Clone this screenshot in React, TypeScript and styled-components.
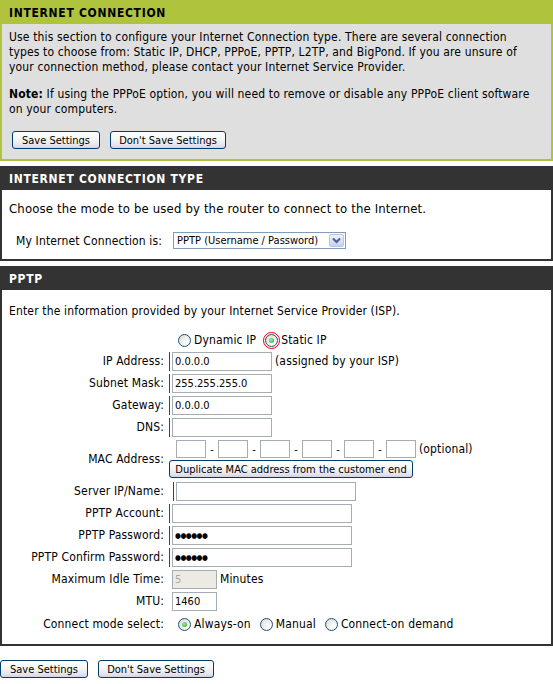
import styled, { createGlobalStyle } from 'styled-components';

const GREEN = '#afc43c';
const DARK = '#333333';
const FONT = '"DejaVu Sans Condensed", "DejaVu Sans", Tahoma, sans-serif';

type Tone = 'green' | 'dark';

const GlobalStyle = createGlobalStyle`
  body {
    margin: 0;
    background: #fff;
    font-family: ${FONT};
    font-size: 12px;
    letter-spacing: 0.15px;
    color: #000;
  }
`;

const Page = styled.div`
  width: 553px;
`;

const Box = styled.section<{ $tone: Tone }>`
  border: 2px solid ${(p) => (p.$tone === 'green' ? GREEN : DARK)};
  background: ${(p) => (p.$tone === 'green' ? '#dfdfdf' : '#fff')};
  margin-bottom: 5px;
`;

const Title = styled.h2<{ $tone: Tone }>`
  margin: 0;
  height: 22px;
  padding: 0 7px;
  background: ${(p) => (p.$tone === 'green' ? GREEN : DARK)};
  color: ${(p) => (p.$tone === 'green' ? '#000' : '#fff')};
  font: bold 12px ${FONT};
  line-height: 22px;
  letter-spacing: 0.7px;
`;

const Body = styled.div<{ $pad: string }>`
  padding: ${(p) => p.$pad};
`;

const Text = styled.p<{ $size?: number; $gap?: number }>`
  margin: ${(p) => p.$gap ?? 0}px 0 0;
  font-size: ${(p) => p.$size ?? 12}px;
  line-height: 15px;
  white-space: nowrap;
`;

const ButtonRow = styled.div<{ $indent: number; $top: number }>`
  display: flex;
  gap: 10px;
  padding-left: ${(p) => p.$indent}px;
  margin-top: ${(p) => p.$top}px;
`;

const Button = styled.button<{ $w: number }>`
  width: ${(p) => p.$w}px;
  height: 18px;
  padding: 0;
  border: 1px solid #003c74;
  border-radius: 3px;
  background: linear-gradient(#ffffff 0%, #f5f5f2 45%, #e6e5ef 80%, #d3d2e4 100%);
  font: 11px ${FONT};
  color: #000;
  cursor: pointer;
`;

const ConnRow = styled.div`
  display: flex;
  align-items: center;
  gap: 11px;
  margin-top: 16px;
  padding-left: 7px;
`;

const SelectBox = styled.div`
  display: flex;
  align-items: center;
  width: 173px;
  height: 17px;
  box-sizing: border-box;
  border: 1px solid #7f9db9;
  background: #fff;
  padding-left: 3px;
  font-size: 11px;
  letter-spacing: 0;
`;

const SelectArrow = styled.span`
  margin-left: auto;
  margin-right: 1px;
  width: 15px;
  height: 13px;
  box-sizing: border-box;
  border: 1px solid #b6c6ec;
  border-radius: 2px;
  background: linear-gradient(#eef2fd, #c4d2f4);
  display: flex;
  align-items: center;
  justify-content: center;
`;

const Row = styled.div<{ $h?: number }>`
  display: grid;
  grid-template-columns: 162px 1fr;
  align-items: center;
  min-height: ${(p) => p.$h ?? 22}px;
`;

const Label = styled.div`
  text-align: right;
  white-space: nowrap;
`;

const Field = styled.div<{ $indent?: number }>`
  display: flex;
  align-items: center;
  padding-left: ${(p) => 5 + (p.$indent ?? 0)}px;
`;

const Mark = styled.span<{ $on?: boolean }>`
  display: inline-flex;
  border-left: 1px solid ${(p) => (p.$on ? '#e00000' : 'transparent')};
  padding-left: 2px;
`;

const TextInput = styled.input<{ $w: number }>`
  width: ${(p) => p.$w}px;
  height: 19px;
  box-sizing: border-box;
  margin: 0;
  border: 1px solid #a5acb2;
  padding: 0 2px;
  font: 11px ${FONT};
  color: #000;
  background: #fff;
  outline: none;
  &:disabled {
    background: #ebebe4;
    color: #aca899;
  }
`;

const DotInput = styled(TextInput)`
  font-size: 7.5px;
  letter-spacing: -0.5px;
`;

const Aside = styled.span`
  margin-left: 3px;
  white-space: nowrap;
`;

const Options = styled.div`
  display: flex;
  align-items: center;
  padding-left: 14px;
  gap: 9px;
`;

const Option = styled.label`
  display: inline-flex;
  align-items: center;
  gap: 3px;
  white-space: nowrap;
`;

const Radio = styled.span<{ $checked?: boolean; $focused?: boolean }>`
  position: relative;
  display: inline-block;
  width: 13px;
  height: 13px;
  box-sizing: border-box;
  border-radius: 50%;
  border: 1px solid #1c5180;
  background: radial-gradient(circle at 70% 70%, #ffffff 0%, #f3f3ef 35%, #d6d6ce 100%);
  &::after {
    content: '';
    display: ${(p) => (p.$checked ? 'block' : 'none')};
    position: absolute;
    left: 3px;
    top: 3px;
    width: 5px;
    height: 5px;
    border-radius: 50%;
    background: radial-gradient(circle at 40% 40%, #9ef09e, #21a121);
  }
  &::before {
    content: '';
    display: ${(p) => (p.$focused ? 'block' : 'none')};
    position: absolute;
    inset: -3px;
    border: 1px solid #e00000;
    border-radius: 50%;
  }
`;

const MacField = styled.div`
  display: flex;
  flex-direction: column;
  gap: 2px;
  padding-left: 5px;
`;

const MacLine = styled.div`
  display: flex;
  align-items: center;
  padding-left: 7px;
`;

const Dash = styled.span`
  width: 12px;
  text-align: center;
  font-size: 11px;
`;

const MacBox = styled(TextInput)`
  height: 18px;
`;

const Footer = styled.div`
  padding-top: 9px;
`;

function Chevron() {
  return (
    <svg width="9" height="7" viewBox="0 0 9 7">
      <path d="M1 1.5 L4.5 5 L8 1.5" fill="none" stroke="#4d6185" strokeWidth="2" />
    </svg>
  );
}

function SaveButtons({ indent, top }: { indent: number; top: number }) {
  return (
    <ButtonRow $indent={indent} $top={top}>
      <Button $w={88}>Save Settings</Button>
      <Button $w={116}>Don't Save Settings</Button>
    </ButtonRow>
  );
}

const MAC_PARTS = [0, 1, 2, 3, 4, 5];

export default function App() {
  return (
    <Page>
      <GlobalStyle />
      <Box $tone="green">
        <Title $tone="green">INTERNET CONNECTION</Title>
        <Body $pad="6px 7px 10px">
          <Text>
            Use this section to configure your Internet Connection type. There are several connection
            <br />
            types to choose from: Static IP, DHCP, PPPoE, PPTP, L2TP, and BigPond. If you are unsure of
            <br />
            your connection method, please contact your Internet Service Provider.
          </Text>
          <Text $gap={12}>
            <b>Note:</b> If using the PPPoE option, you will need to remove or disable any PPPoE client software
            <br />
            on your computers.
          </Text>
          <SaveButtons indent={3} top={14} />
        </Body>
      </Box>

      <Box $tone="dark">
        <Title $tone="dark">INTERNET CONNECTION TYPE</Title>
        <Body $pad="11px 7px 10px">
          <Text $size={13}>Choose the mode to be used by the router to connect to the Internet.</Text>
          <ConnRow>
            <span>My Internet Connection is:</span>
            <SelectBox>
              PPTP (Username / Password)
              <SelectArrow>
                <Chevron />
              </SelectArrow>
            </SelectBox>
          </ConnRow>
        </Body>
      </Box>

      <Box $tone="dark">
        <Title $tone="dark">PPTP</Title>
        <Body $pad="14px 0 8px">
          <Body $pad="0 7px 11px">
            <Text>Enter the information provided by your Internet Service Provider (ISP).</Text>
          </Body>
          <Row $h={20}>
            <Label />
            <Options>
              <Option>
                <Radio />
                Dynamic IP
              </Option>
              <Option>
                <Radio $checked $focused />
                Static IP
              </Option>
            </Options>
          </Row>
          <Row>
            <Label>IP Address:</Label>
            <Field>
              <Mark $on>
                <TextInput $w={100} defaultValue="0.0.0.0" />
              </Mark>
              <Aside>(assigned by your ISP)</Aside>
            </Field>
          </Row>
          <Row>
            <Label>Subnet Mask:</Label>
            <Field>
              <Mark $on>
                <TextInput $w={100} defaultValue="255.255.255.0" />
              </Mark>
            </Field>
          </Row>
          <Row>
            <Label>Gateway:</Label>
            <Field>
              <Mark $on>
                <TextInput $w={100} defaultValue="0.0.0.0" />
              </Mark>
            </Field>
          </Row>
          <Row>
            <Label>DNS:</Label>
            <Field>
              <Mark $on>
                <TextInput $w={100} defaultValue="" />
              </Mark>
            </Field>
          </Row>
          <Row $h={42}>
            <Label>MAC Address:</Label>
            <MacField>
              <MacLine>
                {MAC_PARTS.map((i) => (
                  <span key={i} style={{ display: 'contents' }}>
                    {i > 0 && <Dash>-</Dash>}
                    <MacBox $w={30} defaultValue="" />
                  </span>
                ))}
                <Aside>(optional)</Aside>
              </MacLine>
              <Button $w={244}>Duplicate MAC address from the customer end</Button>
            </MacField>
          </Row>
          <Row>
            <Label>Server IP/Name:</Label>
            <Field $indent={4}>
              <Mark $on>
                <TextInput $w={180} defaultValue="" />
              </Mark>
            </Field>
          </Row>
          <Row>
            <Label>PPTP Account:</Label>
            <Field>
              <Mark $on>
                <TextInput $w={180} defaultValue="" />
              </Mark>
            </Field>
          </Row>
          <Row>
            <Label>PPTP Password:</Label>
            <Field>
              <Mark $on>
                <DotInput $w={180} defaultValue="●●●●●●" />
              </Mark>
            </Field>
          </Row>
          <Row>
            <Label>PPTP Confirm Password:</Label>
            <Field>
              <Mark $on>
                <DotInput $w={180} defaultValue="●●●●●●" />
              </Mark>
            </Field>
          </Row>
          <Row>
            <Label>Maximum Idle Time:</Label>
            <Field>
              <Mark>
                <TextInput $w={45} defaultValue="5" disabled />
              </Mark>
              <Aside>Minutes</Aside>
            </Field>
          </Row>
          <Row>
            <Label>MTU:</Label>
            <Field>
              <Mark>
                <TextInput $w={45} defaultValue="1460" />
              </Mark>
            </Field>
          </Row>
          <Row $h={24}>
            <Label>Connect mode select:</Label>
            <Options>
              <Option>
                <Radio $checked />
                Always-on
              </Option>
              <Option>
                <Radio />
                Manual
              </Option>
              <Option>
                <Radio />
                Connect-on demand
              </Option>
            </Options>
          </Row>
        </Body>
      </Box>

      <Footer>
        <SaveButtons indent={0} top={0} />
      </Footer>
    </Page>
  );
}
